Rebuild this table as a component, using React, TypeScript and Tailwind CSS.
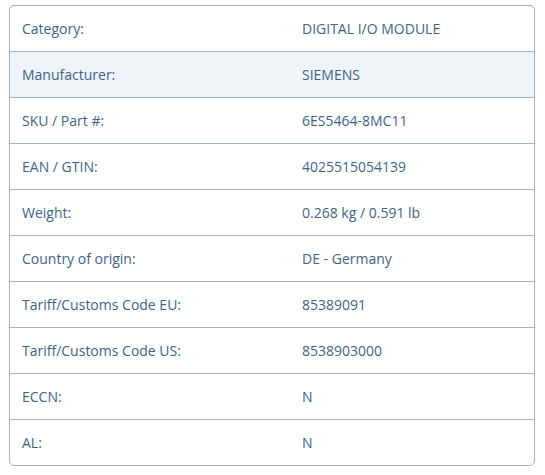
const rows: [string, string][] = [
  ['Category:', 'DIGITAL I/O MODULE'],
  ['Manufacturer:', 'SIEMENS'],
  ['SKU / Part #:', '6ES5464-8MC11'],
  ['EAN / GTIN:', '4025515054139'],
  ['Weight:', '0.268 kg / 0.591 lb'],
  ['Country of origin:', 'DE - Germany'],
  ['Tariff/Customs Code EU:', '85389091'],
  ['Tariff/Customs Code US:', '8538903000'],
  ['ECCN:', 'N'],
  ['AL:', 'N'],
];

export default function App() {
  return (
    <div className="w-[545px] h-[475px] bg-white pt-[5px] pl-[9px] font-['Open_Sans',sans-serif]">
      <div className="w-[526px] border border-[#a3b5c5] rounded-[5px] overflow-hidden">
        {rows.map(([label, value], i) => (
          <div
            key={label}
            className={`flex items-center text-[14px] text-[#3f6387] ${
              i > 0 ? 'h-[46px] border-t border-[#a3b5c5]' : 'h-[45px]'
            } ${i === 1 ? 'bg-[#eff4f8]' : ''}`}
          >
            <div className="w-[280px] pl-[12px]">{label}</div>
            <div className="flex-1 pl-[12px]">{value}</div>
          </div>
        ))}
      </div>
    </div>
  );
}
